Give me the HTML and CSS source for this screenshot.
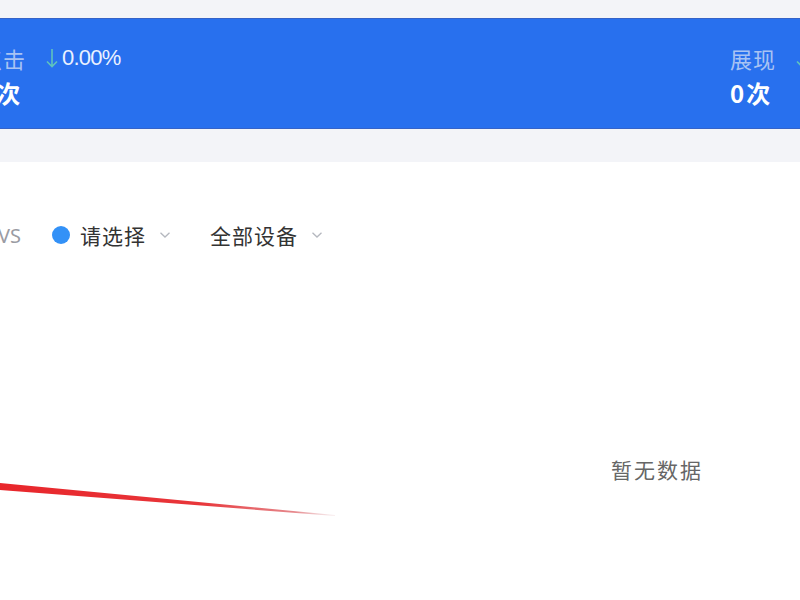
FILE: index.html
```html
<!DOCTYPE html>
<html lang="zh">
<head>
<meta charset="utf-8">
<link rel="stylesheet" href="styles.css">
</head>
<body>
<div class="page">
  <div class="stats">
    <div class="stat stat-left">
      <div class="stat-head"><span class="label">点击</span><span class="change"><svg class="arrow" viewBox="0 0 12 20"><path d="M6 1 V18.5 M1 13.5 L6 18.5 L11 13.5" fill="none" stroke="#5fc3bd" stroke-width="1.6"/></svg>0.00%</span></div>
      <div class="value">0次</div>
    </div>
    <div class="stat stat-right">
      <div class="stat-head"><span class="label">展现</span><span class="change"><svg class="arrow" viewBox="0 0 12 20"><path d="M6 1 V18.5 M1 13.5 L6 18.5 L11 13.5" fill="none" stroke="#5fc3bd" stroke-width="1.6"/></svg>0.00%</span></div>
      <div class="value">0次</div>
    </div>
  </div>
  <div class="gap-band"></div>
  <div class="card">
    <div class="filters">
      <span class="vs">VS</span>
      <span class="select"><span class="dot"></span>请选择<svg class="chev" viewBox="0 0 12 8"><path d="M1.5 1.8 L6 6 L10.5 1.8" fill="none" stroke="#b5b8bf" stroke-width="1.3"/></svg></span>
      <span class="select">全部设备<svg class="chev" viewBox="0 0 12 8"><path d="M1.5 1.8 L6 6 L10.5 1.8" fill="none" stroke="#b5b8bf" stroke-width="1.3"/></svg></span>
    </div>
    <div class="chart">
      <svg class="line" viewBox="0 0 340 40" preserveAspectRatio="none">
        <defs>
          <linearGradient id="g" x1="0" y1="0" x2="1" y2="0">
            <stop offset="0" stop-color="#e8262b"/>
            <stop offset="0.6" stop-color="#e8363a"/>
            <stop offset="0.88" stop-color="#e06a6f" stop-opacity="0.8"/>
            <stop offset="1" stop-color="#e0b0b6" stop-opacity="0.2"/>
          </linearGradient>
        </defs>
        <polygon points="0,2 0,9 335,35 335,34" fill="url(#g)"/>
      </svg>
      <div class="empty">暂无数据</div>
    </div>
  </div>
</div>
</body>
</html>
```

FILE: styles.css
```css
html, body {
  margin: 0;
  padding: 0;
}
body {
  background: #ffffff;
  font-family: "Noto Sans CJK SC", "Noto Sans", sans-serif;
  overflow: hidden;
}
.page {
  width: 800px;
  height: 600px;
  display: flex;
  flex-direction: column;
  background: #f3f4f8;
}
.stats {
  margin-top: 18px;
  height: 111px;
  background: #2870ee;
  border-top: 1px solid #3563c8;
  border-bottom: 1px solid #3563c8;
  box-sizing: border-box;
  display: flex;
  justify-content: space-between;
  align-items: flex-start;
  padding-top: 24px;
}
.stat {
  display: flex;
  flex-direction: column;
  gap: 5px;
}
.stat-left {
  margin-left: -20px;
}
.stat-right {
  margin-right: -60px;
  width: 130px;
}
.stat-head {
  display: flex;
  align-items: center;
  gap: 20px;
  height: 30px;
  white-space: nowrap;
}
.label {
  font-size: 22px;
  color: #a9c3f3;
  letter-spacing: 1px;
}
.change {
  display: flex;
  align-items: center;
  font-family: "Liberation Sans", Arial, sans-serif;
  font-size: 22px;
  color: #eaf1ff;
  letter-spacing: -0.8px;
}
.arrow {
  width: 12px;
  height: 20px;
  margin-right: 4px;
}
.value {
  font-size: 24px;
  font-weight: bold;
  color: #ffffff;
  line-height: 30px;
  letter-spacing: 2px;
}
.gap-band {
  height: 33px;
}
.card {
  flex: 1;
  background: #ffffff;
  display: flex;
  flex-direction: column;
}
.filters {
  display: flex;
  align-items: center;
  height: 40px;
  margin-top: 53px;
  margin-left: -2px;
  font-size: 21px;
  color: #333;
}
.vs {
  font-family: "Noto Sans", sans-serif;
  color: #9a9ca3;
  font-size: 20px;
  margin-right: 31px;
}
.select {
  display: flex;
  align-items: center;
  margin-right: 39px;
  letter-spacing: 1px;
}
.dot {
  width: 18px;
  height: 18px;
  border-radius: 50%;
  background: #3391f7;
  margin-right: 10px;
}
.chev {
  width: 12px;
  height: 8px;
  margin-left: 13px;
}
.chart {
  position: relative;
  flex: 1;
}
.line {
  position: absolute;
  left: 0;
  top: 226px;
  width: 340px;
  height: 40px;
}
.empty {
  position: absolute;
  left: 611px;
  top: 199px;
  font-size: 21px;
  color: #666;
  letter-spacing: 2px;
}
```
